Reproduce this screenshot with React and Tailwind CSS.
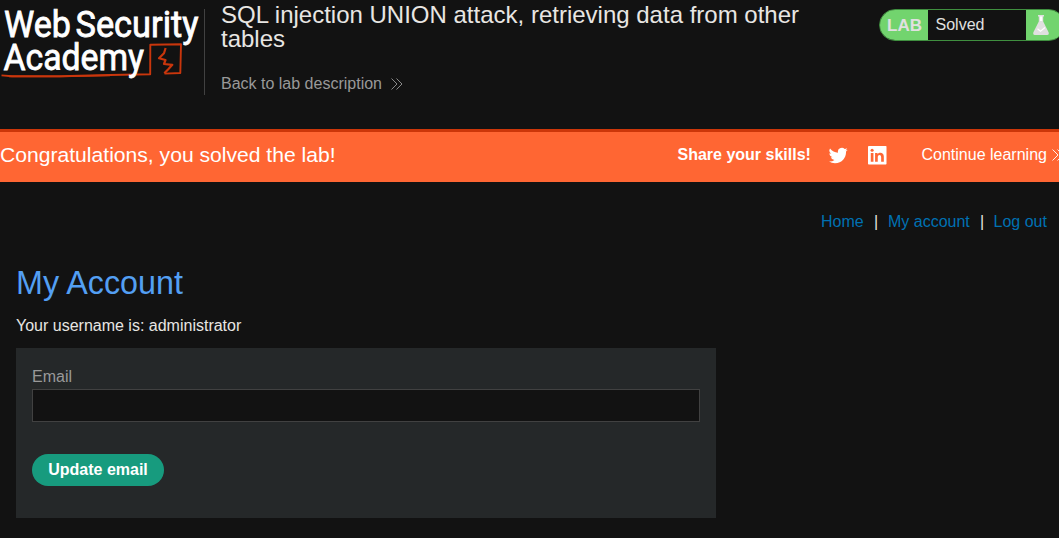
import React from 'react';

function AcademyLogo() {
  return (
    <svg className="h-24 w-[204px] shrink-0 overflow-visible" viewBox="0 0 204 96" role="img" aria-label="Web Security Academy">
      <g fill="none" stroke="#c9360c">
        <path d="M1.5 75.4L12 76.3L60 76.2L110 75L150.2 74.3L150.3 44.8L181 44.2L180.3 73L164.5 73.6" strokeWidth="1.9" strokeLinejoin="round" />
        <path d="M9 76.3L60 76.5L110 75.3" strokeWidth="1.7" />
        <path d="M165.6 48L164 53.2L159 58.2L165.5 60L164 64L172.3 64.8L168.5 69L164.3 73.3" strokeWidth="2.2" strokeLinejoin="round" />
      </g>
      <g fill="#fff" stroke="#fff" strokeWidth="0.8" className="font-['Roboto',sans-serif] text-[36px]">
        <text x="4" y="37.2" textLength="67" lengthAdjust="spacingAndGlyphs">Web</text>
        <text x="75.5" y="37.2" textLength="123" lengthAdjust="spacingAndGlyphs">Security</text>
        <text x="3.5" y="70" textLength="140.5" lengthAdjust="spacingAndGlyphs">Academy</text>
      </g>
    </svg>
  );
}

function DoubleChevron() {
  return (
    <svg className="h-3 w-3 shrink-0" viewBox="0 0 12 12" fill="none" stroke="currentColor" strokeWidth="0.9">
      <path d="M0.5 0.5L6 6L0.5 11.5M5.5 0.5L11 6L5.5 11.5" />
    </svg>
  );
}

function LabStatus() {
  return (
    <div className="mt-[9px] flex h-8 w-[186px] shrink-0 overflow-hidden rounded-full border border-[#3f8f3f] text-base leading-[29px] text-[#e0e0e0]">
      <span className="w-12 shrink-0 bg-[#72d46e] pl-[7px] text-[17px] font-bold leading-[31px]">LAB</span>
      <span className="w-[98px] shrink-0 pl-[7.5px]">Solved</span>
      <span className="flex grow bg-[#72d46e] pl-[7px] pt-[5px]">
        <svg className="h-5 w-4 shrink-0" viewBox="0 0 16 20">
          <path d="M5 0H11V1.6H10.2V6.5L15.6 17.2Q16.4 20 14 20H2Q-0.4 20 0.4 17.2L5.8 6.5V1.6H5Z" fill="#e0e0e0" />
          <path d="M7 1.6H9.2V6H7Z" fill="#fff" />
          <path d="M4.5 13.8L7.5 16.3L12 12.5" fill="none" stroke="#fff" strokeWidth="1.2" />
        </svg>
      </span>
    </div>
  );
}

function TwitterIcon() {
  return (
    <svg className="ml-[0.5px] mt-[2.5px] h-[19px] w-[19px]" viewBox="0 0 24 24" fill="#fff">
      <path d="M23.6 4.6a9.8 9.8 0 0 1-2.8.8 4.9 4.9 0 0 0 2.1-2.7 9.8 9.8 0 0 1-3.1 1.2 4.9 4.9 0 0 0-8.4 4.5A13.9 13.9 0 0 1 1.3 3.2a4.9 4.9 0 0 0 1.5 6.6 4.9 4.9 0 0 1-2.2-.6v.1a4.9 4.9 0 0 0 3.9 4.8 4.9 4.9 0 0 1-2.2.1 4.9 4.9 0 0 0 4.6 3.4A9.9 9.9 0 0 1 0 19.6a13.9 13.9 0 0 0 7.5 2.2c9.1 0 14-7.5 14-14v-.7a10 10 0 0 0 2.1-2.5z" />
    </svg>
  );
}

function LinkedInIcon() {
  return (
    <svg className="h-[18.5px] w-[18.5px]" viewBox="0 0 18 18">
      <rect width="18" height="18" rx="0.8" fill="#fff" />
      <g fill="#ff6633">
        <circle cx="4" cy="4.2" r="1.5" />
        <path d="M2.7 6.8H5.3V15.4H2.7ZM6.9 6.8H9.3V8C10.9 5.9 15.4 6 15.4 10.3V15.4H12.8V10.9C12.8 7.9 9.5 8.1 9.5 10.9V15.4H6.9Z" />
      </g>
    </svg>
  );
}

export default function App() {
  return (
    <div className="flex h-[538px] w-[1059px] flex-col overflow-hidden bg-[#121212] font-['Liberation_Sans',Arial,sans-serif] text-base text-[#e8e6e3]">
      <header className="flex h-[129px] shrink-0">
        <AcademyLogo />
        <div className="mt-[9px] h-[86px] w-px shrink-0 bg-[#414141]" />
        <div className="ml-4 w-[658px] shrink-0 pt-[3px]">
          <h1 className="w-[600px] text-2xl leading-6">SQL injection UNION attack, retrieving data from other tables</h1>
          <a className="mt-[21px] flex items-center leading-6 text-[#999]" href="#lab">
            <span className="mr-[9px]">Back to lab description</span>
            <DoubleChevron />
          </a>
        </div>
        <LabStatus />
      </header>

      <section className="flex h-[53px] shrink-0 items-start whitespace-nowrap border-t-[3px] border-[#cc3609] bg-[#ff6633] text-white">
        <h2 className="w-[677.5px] shrink-0 pt-[11px] text-[21.12px] leading-6">Congratulations, you solved the lab!</h2>
        <div className="flex w-[244px] shrink-0 pt-[11px] leading-6">
          <span className="w-[151px] font-bold">Share your skills!</span>
          <a className="w-[39.5px]" href="#twitter" aria-label="Twitter"><TwitterIcon /></a>
          <a className="pt-[3px]" href="#linkedin" aria-label="LinkedIn"><LinkedInIcon /></a>
        </div>
        <a className="flex shrink-0 items-center pt-[11px] leading-6" href="#next">
          <span className="mr-[5px]">Continue learning</span>
          <DoubleChevron />
        </a>
      </section>

      <main className="flex flex-col px-4">
        <nav className="-mr-1 mt-7 flex justify-end whitespace-pre leading-6 text-[#0071b3]">
          <a className="w-[53px]" href="#home">Home</a>
          <span className="w-[14px] text-[#e8e6e3]">|</span>
          <a className="w-[92px]" href="#account">My account</a>
          <span className="w-[13.5px] text-[#e8e6e3]">|</span>
          <a className="w-[53.5px]" href="#logout">Log out</a>
        </nav>
        <h1 className="mt-[31px] text-[32.3px] leading-[36px] text-[#539ff3]">My Account</h1>
        <p className="mt-[13px] leading-6">Your username is: administrator</p>
        <form className="mt-[10px] flex h-[170px] w-[700px] flex-col items-start bg-[#252829] px-4 pt-4">
          <label className="leading-[25px] text-[#999]" htmlFor="email">Email</label>
          <input id="email" type="email" className="h-[33px] w-full border border-[#414141] bg-[#121212] px-2 outline-none" />
          <button type="button" className="mt-8 h-8 w-[132px] rounded-full bg-[#179b7e] font-bold leading-8 text-white">Update email</button>
        </form>
      </main>
    </div>
  );
}
